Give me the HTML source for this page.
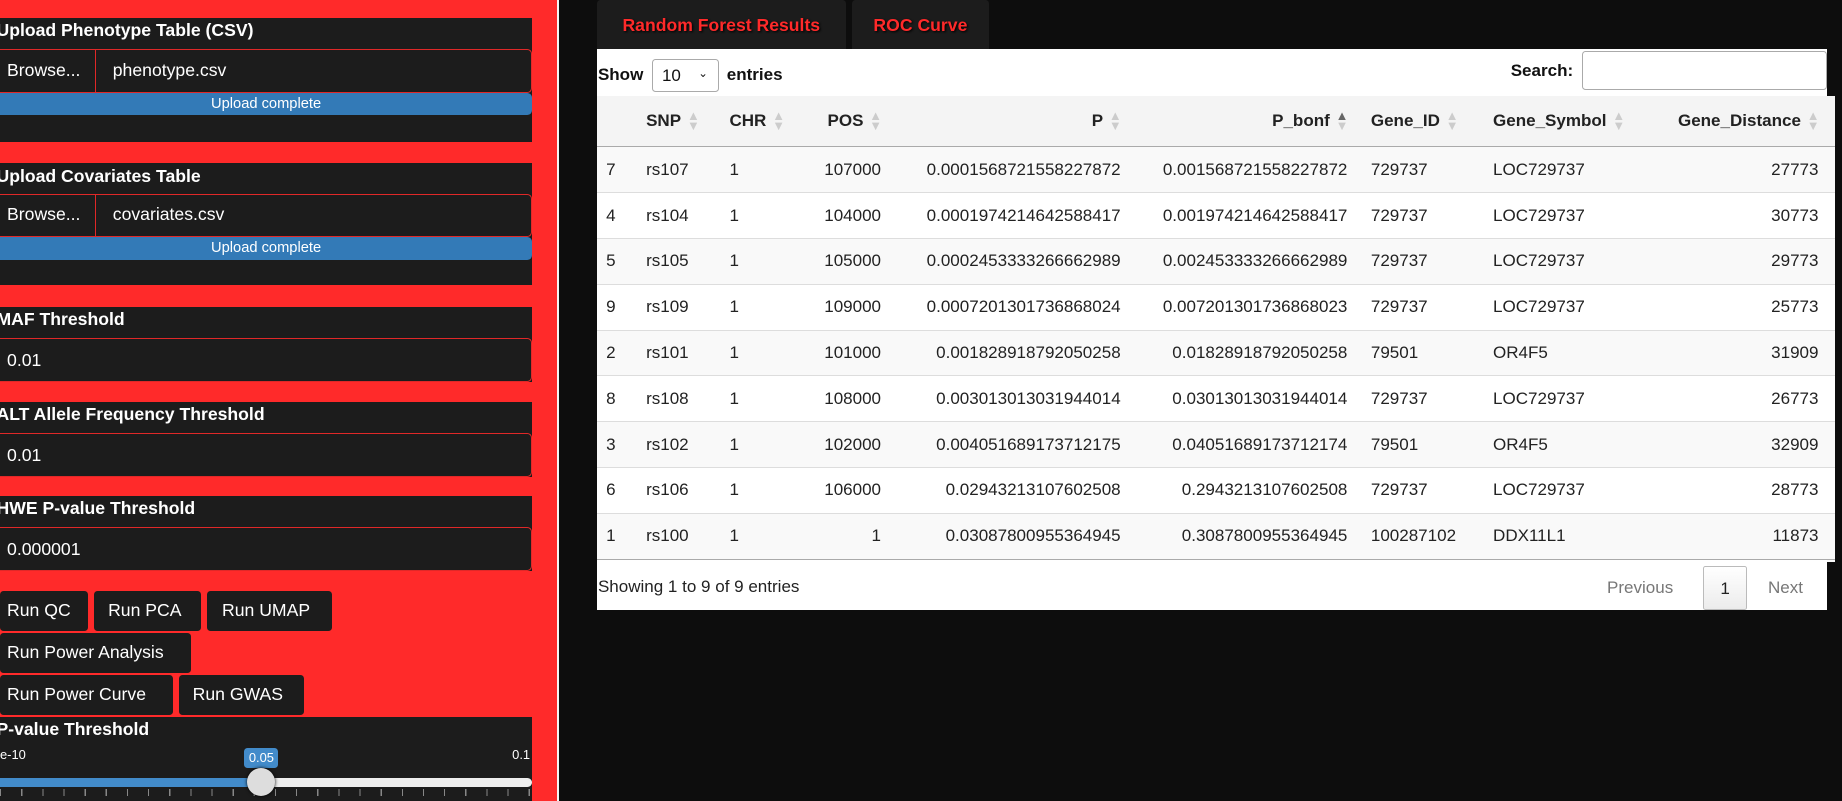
<!DOCTYPE html>
<html><head><meta charset="utf-8"><style>
*{box-sizing:border-box;margin:0;padding:0}
html,body{width:1842px;height:801px;overflow:hidden;background:#0d0d0d}
#w{zoom:1.17474;width:1568px;height:682px;position:relative;font-family:"Liberation Sans",sans-serif;overflow:hidden}
.a{position:absolute}
#side{left:0;top:0;width:476px;height:682px;background:#ff2a2a;border-right:2px solid #f4f4f4}
.pn{position:absolute;left:0;width:453px;background:#1c1c1c}
.t{position:absolute;left:-3px;color:#fff;font-weight:bold;font-size:15px;white-space:nowrap}
.inp{position:absolute;left:0;width:453px;height:37px;border:1px solid #e02828;border-left:none;border-radius:0 4px 4px 0;background:#1c1c1c;color:#fff;font-size:15px;padding:9px 6px}
.br{position:absolute;left:0;width:82px;height:36px;border-right:1px solid #e02828;color:#fff;font-size:15px;padding:9px 6px}
.fn{position:absolute;left:96px;color:#fff;font-size:15px}
.pb{position:absolute;left:0;width:453px;height:19px;background:#337ab7;color:#fff;font-size:12.5px;text-align:center;line-height:19px;border-radius:0 4px 4px 0}
.btn{position:absolute;height:34px;background:#1c1c1c;color:#fff;font-size:15px;line-height:34px;padding-left:6px;border-radius:3px}
.tab{position:absolute;top:0;height:42px;background:#1c1c1c;color:#ff2a2a;font-weight:bold;font-size:15px;line-height:44px;text-align:center;text-shadow:1px 1px 2px #000;border-radius:3px 3px 0 0}
table{border-collapse:collapse;font-size:14.5px;color:#222;position:absolute;left:508px;top:82px;width:1054px;table-layout:fixed}
th{height:43px;background:#f4f4f4;font-weight:bold;border-bottom:1px solid #aaa;padding:0 8px;white-space:nowrap;position:relative}
td{height:39px;border-top:1px solid #ddd;padding:0 8px;white-space:nowrap}
tr:nth-child(odd) td{background:#f9f9f9}
tr:nth-child(even) td{background:#fff}
tbody tr:last-child td{border-bottom:1px solid #aaa}
.r{text-align:right}
th:last-child,td:last-child{padding-right:14px}
.s{display:inline-block;width:10px;margin-left:5px;vertical-align:middle;color:#ccc;font-size:11px;line-height:9px}
</style></head><body><div id="w">
<div id="side" class="a"></div>
<div class="pn" style="top:15px;height:106px"></div>
<div class="t" style="top:17px">Upload Phenotype Table (CSV)</div>
<div class="inp" style="top:42px"></div><div class="br" style="top:42px">Browse...</div><div class="fn" style="top:51px">phenotype.csv</div>
<div class="pb" style="top:79px">Upload complete</div>
<div class="pn" style="top:139px;height:104px"></div>
<div class="t" style="top:141px">Upload Covariates Table</div>
<div class="inp" style="top:165px"></div><div class="br" style="top:165px">Browse...</div><div class="fn" style="top:174px">covariates.csv</div>
<div class="pb" style="top:202px">Upload complete</div>
<div class="pn" style="top:261px;height:64px"></div>
<div class="t" style="top:263px">MAF Threshold</div>
<div class="inp" style="top:288px">0.01</div>
<div class="pn" style="top:342px;height:64px"></div>
<div class="t" style="top:344px">ALT Allele Frequency Threshold</div>
<div class="inp" style="top:369px">0.01</div>
<div class="pn" style="top:422px;height:64px"></div>
<div class="t" style="top:424px">HWE P-value Threshold</div>
<div class="inp" style="top:449px">0.000001</div>
<div class="btn" style="top:503px;left:0;width:75px">Run QC</div>
<div class="btn" style="top:503px;left:80px;width:91px;padding-left:12px">Run PCA</div>
<div class="btn" style="top:503px;left:176px;width:107px;padding-left:13px">Run UMAP</div>
<div class="btn" style="top:539px;left:0;width:163px">Run Power Analysis</div>
<div class="btn" style="top:575px;left:0;width:147px">Run Power Curve</div>
<div class="btn" style="top:575px;left:152px;width:107px;padding-left:12px">Run GWAS</div>
<div class="pn" style="top:610px;height:72px"></div>
<div class="t" style="top:612px">P-value Threshold</div>
<div class="a" style="top:636px;left:0;color:#fff;font-size:11px">e-10</div>
<div class="a" style="top:636px;left:436px;color:#fff;font-size:11px">0.1</div>
<div class="a" style="top:637px;left:208px;width:29px;height:17px;background:#428bca;color:#fff;font-size:11px;text-align:center;line-height:17px;border-radius:3px">0.05</div>
<div class="a" style="top:662px;left:0;width:453px;height:8px;background:#eee;border-radius:4px"></div>
<div class="a" style="top:662px;left:0;width:222px;height:8px;background:#428bca"></div>
<div class="a" style="top:672px;left:0;width:453px;height:6px;background:repeating-linear-gradient(90deg,#888 0 1px,transparent 1px 18px)"></div>
<div class="a" style="top:654px;left:210px;width:24px;height:24px;border-radius:50%;background:#ddd;box-shadow:0 0 3px #000"></div>
<div class="tab" style="left:508px;width:212px">Random Forest Results</div>
<div class="tab" style="left:725px;width:117px">ROC Curve</div>
<div class="a" style="left:508px;top:42px;width:1047px;height:477px;background:#fff"></div>
<div class="a" style="left:1555px;top:82px;width:7px;height:396px;background:#f9f9f9"></div>
<div class="a" style="left:509px;top:50px;font-size:14.5px;font-weight:bold;color:#111">Show <span style="display:inline-block;width:57px;height:28px;border:1px solid #aaa;border-radius:3px;vertical-align:middle;font-weight:normal;padding:5px 8px;margin:0 3px">10 <span style="float:right;font-size:10px">&#8964;</span></span> entries</div>
<div class="a" style="left:1286px;top:52px;font-size:14.5px;font-weight:bold;color:#111">Search:</div>
<div class="a" style="left:1347px;top:43px;width:208px;height:34px;border:1px solid #aaa;border-radius:3px;background:#fff"></div>
<table>
<colgroup><col style="width:32px"><col style="width:70px"><col style="width:70px"><col style="width:78px"><col style="width:204px"><col style="width:193px"><col style="width:105px"><col style="width:140px"><col style="width:162px"></colgroup>
<thead><tr><th></th><th style="text-align:left;padding-left:10px">SNP<span class="s">▲<br>▼</span></th><th style="text-align:left;padding-left:11px">CHR<span class="s">▲<br>▼</span></th><th class="r">POS<span class="s">▲<br>▼</span></th><th class="r">P<span class="s">▲<br>▼</span></th><th class="r">P_bonf<span class="s"><b style="color:#666">▲</b><br>▼</span></th><th style="text-align:left;padding-left:12px">Gene_ID<span class="s">▲<br>▼</span></th><th style="text-align:left;padding-left:11px">Gene_Symbol<span class="s">▲<br>▼</span></th><th class="r">Gene_Distance<span class="s">▲<br>▼</span></th></tr></thead>
<tbody>
<tr><td>7</td><td style="padding-left:10px">rs107</td><td style="padding-left:11px">1</td><td class="r">107000</td><td class="r">0.0001568721558227872</td><td class="r">0.001568721558227872</td><td style="padding-left:12px">729737</td><td style="padding-left:11px">LOC729737</td><td class="r">27773</td></tr>
<tr><td>4</td><td style="padding-left:10px">rs104</td><td style="padding-left:11px">1</td><td class="r">104000</td><td class="r">0.0001974214642588417</td><td class="r">0.001974214642588417</td><td style="padding-left:12px">729737</td><td style="padding-left:11px">LOC729737</td><td class="r">30773</td></tr>
<tr><td>5</td><td style="padding-left:10px">rs105</td><td style="padding-left:11px">1</td><td class="r">105000</td><td class="r">0.0002453333266662989</td><td class="r">0.002453333266662989</td><td style="padding-left:12px">729737</td><td style="padding-left:11px">LOC729737</td><td class="r">29773</td></tr>
<tr><td>9</td><td style="padding-left:10px">rs109</td><td style="padding-left:11px">1</td><td class="r">109000</td><td class="r">0.0007201301736868024</td><td class="r">0.007201301736868023</td><td style="padding-left:12px">729737</td><td style="padding-left:11px">LOC729737</td><td class="r">25773</td></tr>
<tr><td>2</td><td style="padding-left:10px">rs101</td><td style="padding-left:11px">1</td><td class="r">101000</td><td class="r">0.001828918792050258</td><td class="r">0.01828918792050258</td><td style="padding-left:12px">79501</td><td style="padding-left:11px">OR4F5</td><td class="r">31909</td></tr>
<tr><td>8</td><td style="padding-left:10px">rs108</td><td style="padding-left:11px">1</td><td class="r">108000</td><td class="r">0.003013013031944014</td><td class="r">0.03013013031944014</td><td style="padding-left:12px">729737</td><td style="padding-left:11px">LOC729737</td><td class="r">26773</td></tr>
<tr><td>3</td><td style="padding-left:10px">rs102</td><td style="padding-left:11px">1</td><td class="r">102000</td><td class="r">0.004051689173712175</td><td class="r">0.04051689173712174</td><td style="padding-left:12px">79501</td><td style="padding-left:11px">OR4F5</td><td class="r">32909</td></tr>
<tr><td>6</td><td style="padding-left:10px">rs106</td><td style="padding-left:11px">1</td><td class="r">106000</td><td class="r">0.02943213107602508</td><td class="r">0.2943213107602508</td><td style="padding-left:12px">729737</td><td style="padding-left:11px">LOC729737</td><td class="r">28773</td></tr>
<tr><td>1</td><td style="padding-left:10px">rs100</td><td style="padding-left:11px">1</td><td class="r">1</td><td class="r">0.03087800955364945</td><td class="r">0.3087800955364945</td><td style="padding-left:12px">100287102</td><td style="padding-left:11px">DDX11L1</td><td class="r">11873</td></tr>
</tbody></table>
<div class="a" style="left:509px;top:491px;font-size:14.5px;color:#222">Showing 1 to 9 of 9 entries</div>
<div class="a" style="left:1368px;top:492px;font-size:14.5px;color:#777">Previous</div>
<div class="a" style="left:1450px;top:482px;width:37px;height:37px;border:1px solid #bbb;border-radius:2px;background:linear-gradient(#fff,#ececec);font-size:14.5px;text-align:center;line-height:37px;color:#222">1</div>
<div class="a" style="left:1505px;top:492px;font-size:14.5px;color:#777">Next</div>
</div></body></html>
